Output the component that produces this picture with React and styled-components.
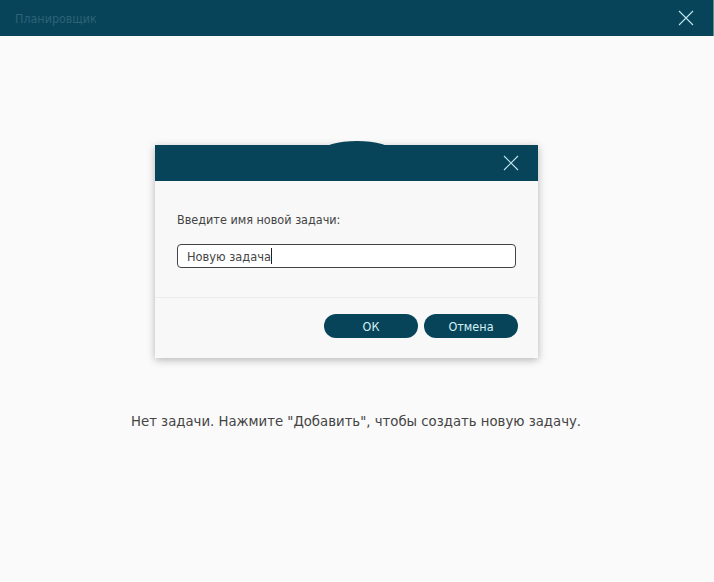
import React from "react";
import styled, { createGlobalStyle } from "styled-components";

const Global = createGlobalStyle`
  html, body { margin: 0; padding: 0; background: #fafafa; }
  #root { width: 714px; height: 582px; overflow: hidden; }
  * { box-sizing: border-box; }
`;
const Page = styled.div`
  width: 714px; height: 582px; background: #fafafa; display: flex; flex-direction: column;
  font-family: "DejaVu Sans Condensed", "DejaVu Sans", Tahoma, sans-serif; font-stretch: condensed; color: #444;
`;
const TitleBar = styled.header`
  height: 36px; flex: none; background: #07445a; display: flex; align-items: center;
  justify-content: space-between; padding: 0 19px 0 15px; border-right: 1px solid #5f9186;
`;
const AppTitle = styled.span`font-size: 12.4px; line-height: 14px; margin-top: 2px; color: #2c6277;`;
const CloseIcon = ({ className }) => (
  <svg className={className} width="16" height="16" viewBox="0 0 16 16" fill="none">
    <path d="M1 1 L15 15 M15 1 L1 15" stroke="#bfe6ee" strokeWidth="1.1" />
  </svg>
);
const Content = styled.main`
  flex: 1; display: flex; flex-direction: column; align-items: flex-start; padding: 109px 0 0 155px;
`;
const Dialog = styled.section`
  position: relative; width: 383px; height: 213px; background: #f8f8f8;
  box-shadow: 0 2px 8px rgba(0,0,0,.28); display: flex; flex-direction: column;
`;
const Bump = styled.div`
  position: absolute; left: 167px; top: -4px; width: 70px; height: 20px; border-radius: 50%;
  background: #07445a;
`;
const DialogHead = styled.div`
  position: relative; height: 36px; flex: none; background: #07445a; display: flex; align-items: center;
  justify-content: flex-end; padding-right: 19px;
`;
const DialogBody = styled.div`
  height: 117px; padding: 31px 22px 0; border-bottom: 1px solid #ececec; flex: none;
`;
const Label = styled.div`font-size: 12.5px; line-height: 15px; color: #444;`;
const InputBox = styled.div`
  margin-top: 17px; width: 339px; height: 24px; border: 1px solid #444; border-radius: 4px; background: #fff;
  display: flex; align-items: center; padding-left: 9px; font-size: 12.7px; color: #444;
`;
const Caret = styled.span`display: inline-block; width: 1px; height: 16px; background: #222;`;
const Footer = styled.div`
  flex: 1; display: flex; justify-content: flex-end; gap: 6px; padding: 16px 20px 0 0;
`;
const Button = styled.button`
  width: 94px; height: 24px; border: 0; border-radius: 12px; background: #07445a; color: #d4f0f5;
  font-family: inherit; font-stretch: condensed; font-size: 12.5px; padding: 0;
`;
const Message = styled.p`
  margin: 53px 0 0 -24px; font-size: 14.75px; line-height: 20px; color: #444; white-space: nowrap;
`;

export default function App() {
  return (
    <Page>
      <Global />
      <TitleBar>
        <AppTitle>Планировщик</AppTitle>
        <CloseIcon />
      </TitleBar>
      <Content>
        <Dialog>
          <Bump />
          <DialogHead><CloseIcon /></DialogHead>
          <DialogBody>
            <Label>Введите имя новой задачи:</Label>
            <InputBox>Новую задача<Caret /></InputBox>
          </DialogBody>
          <Footer>
            <Button>ОК</Button>
            <Button>Отмена</Button>
          </Footer>
        </Dialog>
        <Message>Нет задачи. Нажмите "Добавить", чтобы создать новую задачу.</Message>
      </Content>
    </Page>
  );
}
